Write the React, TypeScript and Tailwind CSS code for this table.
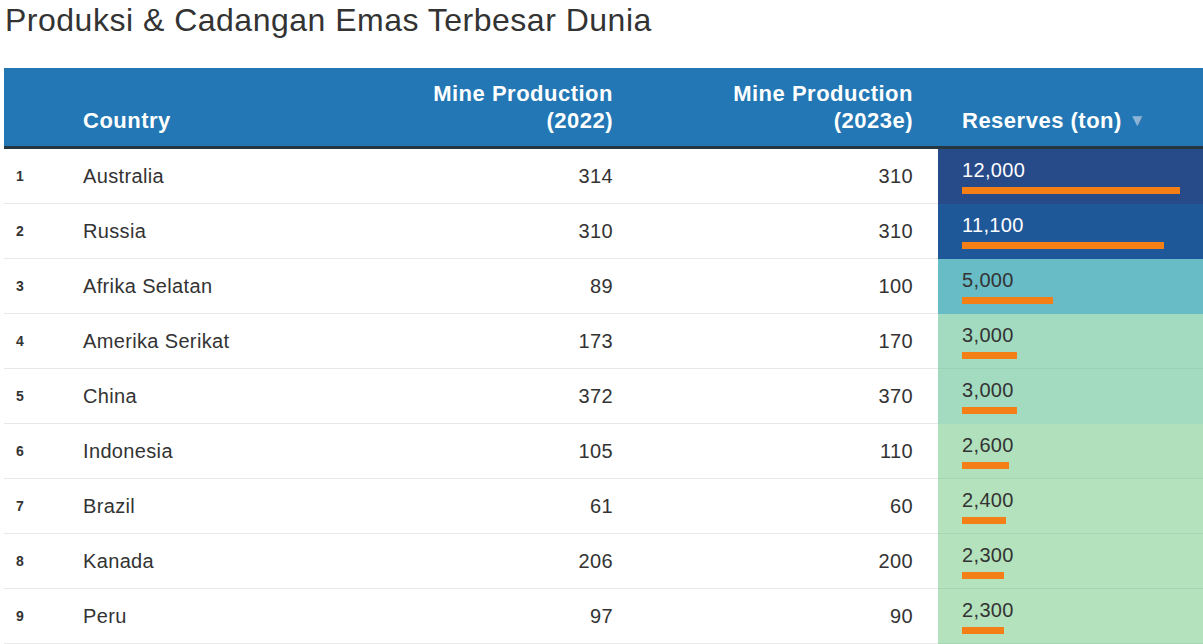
import React from "react";

type Row = { rank: number; country: string; p22: string; p23: string; res: number; bg: string; light: boolean; line: string };

const rows: Row[] = [
  { rank: 1, country: "Australia", p22: "314", p23: "310", res: 12000, bg: "bg-[#274a89]", light: true, line: "border-[#274a89]" },
  { rank: 2, country: "Russia", p22: "310", p23: "310", res: 11100, bg: "bg-[#1f5899]", light: true, line: "border-[#1f5899]" },
  { rank: 3, country: "Afrika Selatan", p22: "89", p23: "100", res: 5000, bg: "bg-[#67bcc6]", light: false, line: "border-[#67bcc6]" },
  { rank: 4, country: "Amerika Serikat", p22: "173", p23: "170", res: 3000, bg: "bg-[#a3dbc0]", light: false, line: "border-[#98d3b6]" },
  { rank: 5, country: "China", p22: "372", p23: "370", res: 3000, bg: "bg-[#a3dbc0]", light: false, line: "border-[#a3dbc0]" },
  { rank: 6, country: "Indonesia", p22: "105", p23: "110", res: 2600, bg: "bg-[#b1e1bc]", light: false, line: "border-[#a6d6b2]" },
  { rank: 7, country: "Brazil", p22: "61", p23: "60", res: 2400, bg: "bg-[#b4e2bc]", light: false, line: "border-[#a6d6b2]" },
  { rank: 8, country: "Kanada", p22: "206", p23: "200", res: 2300, bg: "bg-[#b4e2bc]", light: false, line: "border-[#a6d6b2]" },
  { rank: 9, country: "Peru", p22: "97", p23: "90", res: 2300, bg: "bg-[#b4e2bc]", light: false, line: "border-[#a6d6b2]" },
];

const fmt = (n: number) => n.toLocaleString("en-US");

export default function App() {
  return (
    <div className="w-[1203px] h-[644px] overflow-hidden bg-white text-[#333333]" style={{ fontFamily: '"Liberation Sans", Arial, sans-serif' }}>
      <h1 className="pl-[5px] pt-[2px] text-[32px] leading-[36px] tracking-[0.5px] text-[#333333]">Produksi &amp; Cadangan Emas Terbesar Dunia</h1>
      <div className="ml-[4px] mt-[30px] w-[1199px]">
        <div className="grid grid-cols-[67px_359px_195px_313px_1fr] bg-[#2277b4] border-b-[3px] border-[#263640] h-[81px] text-white font-bold text-[22px] leading-[27px] tracking-[0.5px]">
          <div></div>
          <div className="flex items-end pl-3 pb-[12px]">Country</div>
          <div className="flex flex-col items-end justify-end pr-3 pb-[12px] text-right">
            <span>Mine Production</span>
            <span>(2022)</span>
          </div>
          <div className="flex flex-col items-end justify-end pr-[25px] pb-[12px] text-right">
            <span>Mine Production</span>
            <span>(2023e)</span>
          </div>
          <div className="flex items-end pl-[24px] pb-[12px]">
            <span>Reserves (ton)</span>
            <span className="ml-[7px] text-[17px] leading-[27px] text-[#8db3d6]">▼</span>
          </div>
        </div>
        {rows.map((r) => (
          <div key={r.rank} className="grid grid-cols-[67px_359px_195px_313px_1fr] h-[55px] text-[20px] tracking-[0.35px]">
            <div className="flex items-center pl-3 border-b border-[#e8e8e8] font-bold text-[14px] tracking-normal">{r.rank}</div>
            <div className="flex items-center pl-3 border-b border-[#e8e8e8]">{r.country}</div>
            <div className="flex items-center justify-end pr-3 border-b border-[#e8e8e8]">{r.p22}</div>
            <div className="flex items-center justify-end pr-[25px] border-b border-[#e8e8e8]">{r.p23}</div>
            <div className={`flex flex-col pl-[24px] pt-[9px] border-b ${r.bg} ${r.line} ${r.light ? "text-white" : "text-[#333333]"}`}>
              <span className="leading-[24px]">{fmt(r.res)}</span>
              <div className="mt-[5px] h-[7px] bg-[#f57f17]" style={{ width: `${(r.res * 218) / 12000}px` }}></div>
            </div>
          </div>
        ))}
      </div>
    </div>
  );
}
